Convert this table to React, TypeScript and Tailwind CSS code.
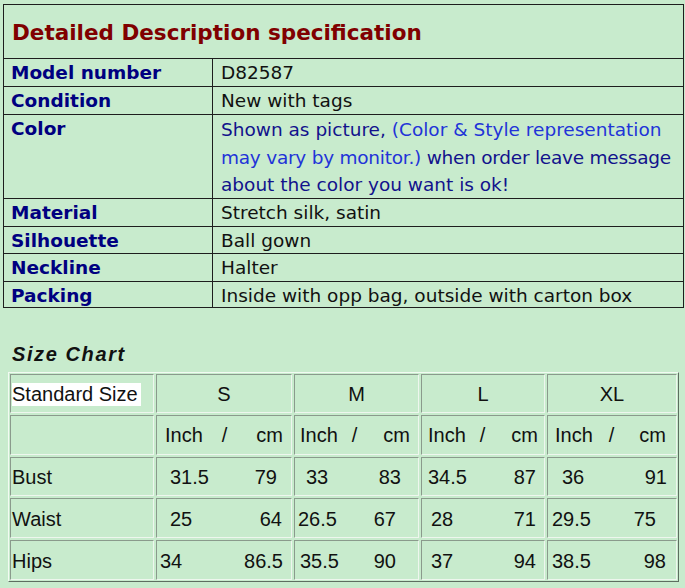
const specs = [
  { label: "Model number", value: "D82587", h: "h-[27px]" },
  { label: "Condition", value: "New with tags", h: "h-[27px]" },
  { label: "Color", value: null, h: "h-[83px]" },
  { label: "Material", value: "Stretch silk, satin", h: "h-[27px]" },
  { label: "Silhouette", value: "Ball gown", h: "h-[26px]" },
  { label: "Neckline", value: "Halter", h: "h-[27px]" },
  { label: "Packing", value: "Inside with opp bag, outside with carton box", h: "h-[25px]" },
];

const sizes = [
  { name: "S", unit: "pl-[8px] pr-[8px]", slash: "ml-[19px]" },
  { name: "M", unit: "pl-[5px] pr-[8px]", slash: "ml-[14px]" },
  { name: "L", unit: "pl-[6px] pr-[6px]", slash: "ml-[14px]" },
  { name: "XL", unit: "pl-[7px] pr-[10px]", slash: "ml-[16px]" },
];

const measures = [
  {
    label: "Bust",
    h: "h-[39px]",
    cells: [
      { inch: "31.5", cm: "79", pad: "pl-[13px] pr-[14px]" },
      { inch: "33", cm: "83", pad: "pl-[11px] pr-[17px]" },
      { inch: "34.5", cm: "87", pad: "pl-[6px] pr-[8px]" },
      { inch: "36", cm: "91", pad: "pl-[14px] pr-[9px]" },
    ],
  },
  {
    label: "Waist",
    h: "h-[40px]",
    cells: [
      { inch: "25", cm: "64", pad: "pl-[13px] pr-[9px]" },
      { inch: "26.5", cm: "67", pad: "pl-[3px] pr-[22px]" },
      { inch: "28", cm: "71", pad: "pl-[9px] pr-[8px]" },
      { inch: "29.5", cm: "75", pad: "pl-[4px] pr-[20px]" },
    ],
  },
  {
    label: "Hips",
    h: "h-[40px]",
    cells: [
      { inch: "34", cm: "86.5", pad: "pl-[3px] pr-[8px]" },
      { inch: "35.5", cm: "90", pad: "pl-[5px] pr-[22px]" },
      { inch: "37", cm: "94", pad: "pl-[9px] pr-[8px]" },
      { inch: "38.5", cm: "98", pad: "pl-[4px] pr-[10px]" },
    ],
  },
];

const cell =
  "border border-t-[#8a9a8c] border-l-[#8a9a8c] border-b-[#eef6ee] border-r-[#eef6ee] flex items-center";

export default function App() {
  return (
    <div className="w-[685px] h-[588px] bg-[#c8ebcd] overflow-hidden pt-[4px]">
      {/* description spec */}
      <div className="ml-[3px] w-[681px] border border-[#1e1e1e] font-['DejaVu_Sans',sans-serif] text-[18.5px]">
        <div className="h-[54px] flex items-center pl-[8px] pt-[3px] border-b border-[#1e1e1e]">
          <h1 className="text-[21.5px] font-bold text-[#800000] leading-[26px]">
            Detailed Description specification
          </h1>
        </div>
        {specs.map((s, i) => (
          <div
            key={s.label}
            className={`grid grid-cols-[209px_1fr] ${i < specs.length - 1 ? "border-b border-[#1e1e1e]" : ""}`}
          >
            <div className={`${s.h} border-r border-[#1e1e1e] pl-[7px] font-bold text-[#000080] leading-[28px]`}>
              {s.label}
            </div>
            {s.value ? (
              <div className={`${s.h} pl-[8px] text-[#111] leading-[28px] whitespace-nowrap`}>{s.value}</div>
            ) : (
              <div className={`${s.h} pl-[8px] pt-[1px] leading-[27.7px] whitespace-nowrap text-[#12128c]`}>
                Shown as picture, <span className="text-[#2233d8]">(Color &amp; Style representation</span>
                <br />
                <span className="tracking-[-0.25px]">
                  <span className="text-[#2233d8]">may vary by monitor.)</span> when order leave message
                </span>
                <br />
                about the color you want is ok!
              </div>
            )}
          </div>
        ))}
      </div>

      {/* size chart */}
      <div className="font-['Liberation_Sans',Arial,sans-serif] text-[#111]">
        <h2 className="mt-[35px] ml-[12px] text-[20px] leading-[23px] font-bold italic tracking-[1.6px]">
          Size Chart
        </h2>
        <div className="mt-[6px] ml-[8px] w-[671px] p-[1px] border border-t-[#f2faf2] border-l-[#f2faf2] border-b-[#5d6e60] border-r-[#5d6e60]">
          <div className="grid grid-cols-[144px_136px_125px_124px_130px] gap-[2px] text-[20px] leading-[23px]">
            {/* header */}
            <div className={`${cell} h-[39px] pl-[1px] pt-[1px]`}>
              <span className="bg-white pr-[3px]">Standard Size</span>
            </div>
            {sizes.map((s) => (
              <div key={s.name} className={`${cell} h-[39px] pt-[1px] justify-center`}>
                {s.name}
              </div>
            ))}

            {/* units */}
            <div className={`${cell} h-[40px]`} />
            {sizes.map((s) => (
              <div key={s.name} className={`${cell} h-[40px] pt-[1px] ${s.unit}`}>
                <span>Inch</span>
                <span className={s.slash}>/</span>
                <span className="ml-auto">cm</span>
              </div>
            ))}

            {measures.map((m) => (
              <div key={m.label} className="contents">
                <div className={`${cell} ${m.h} pl-[1px] pt-[2px]`}>{m.label}</div>
                {m.cells.map((c, j) => (
                  <div key={j} className={`${cell} ${m.h} pt-[2px] justify-between ${c.pad}`}>
                    <span>{c.inch}</span>
                    <span>{c.cm}</span>
                  </div>
                ))}
              </div>
            ))}
          </div>
        </div>
      </div>
    </div>
  );
}
